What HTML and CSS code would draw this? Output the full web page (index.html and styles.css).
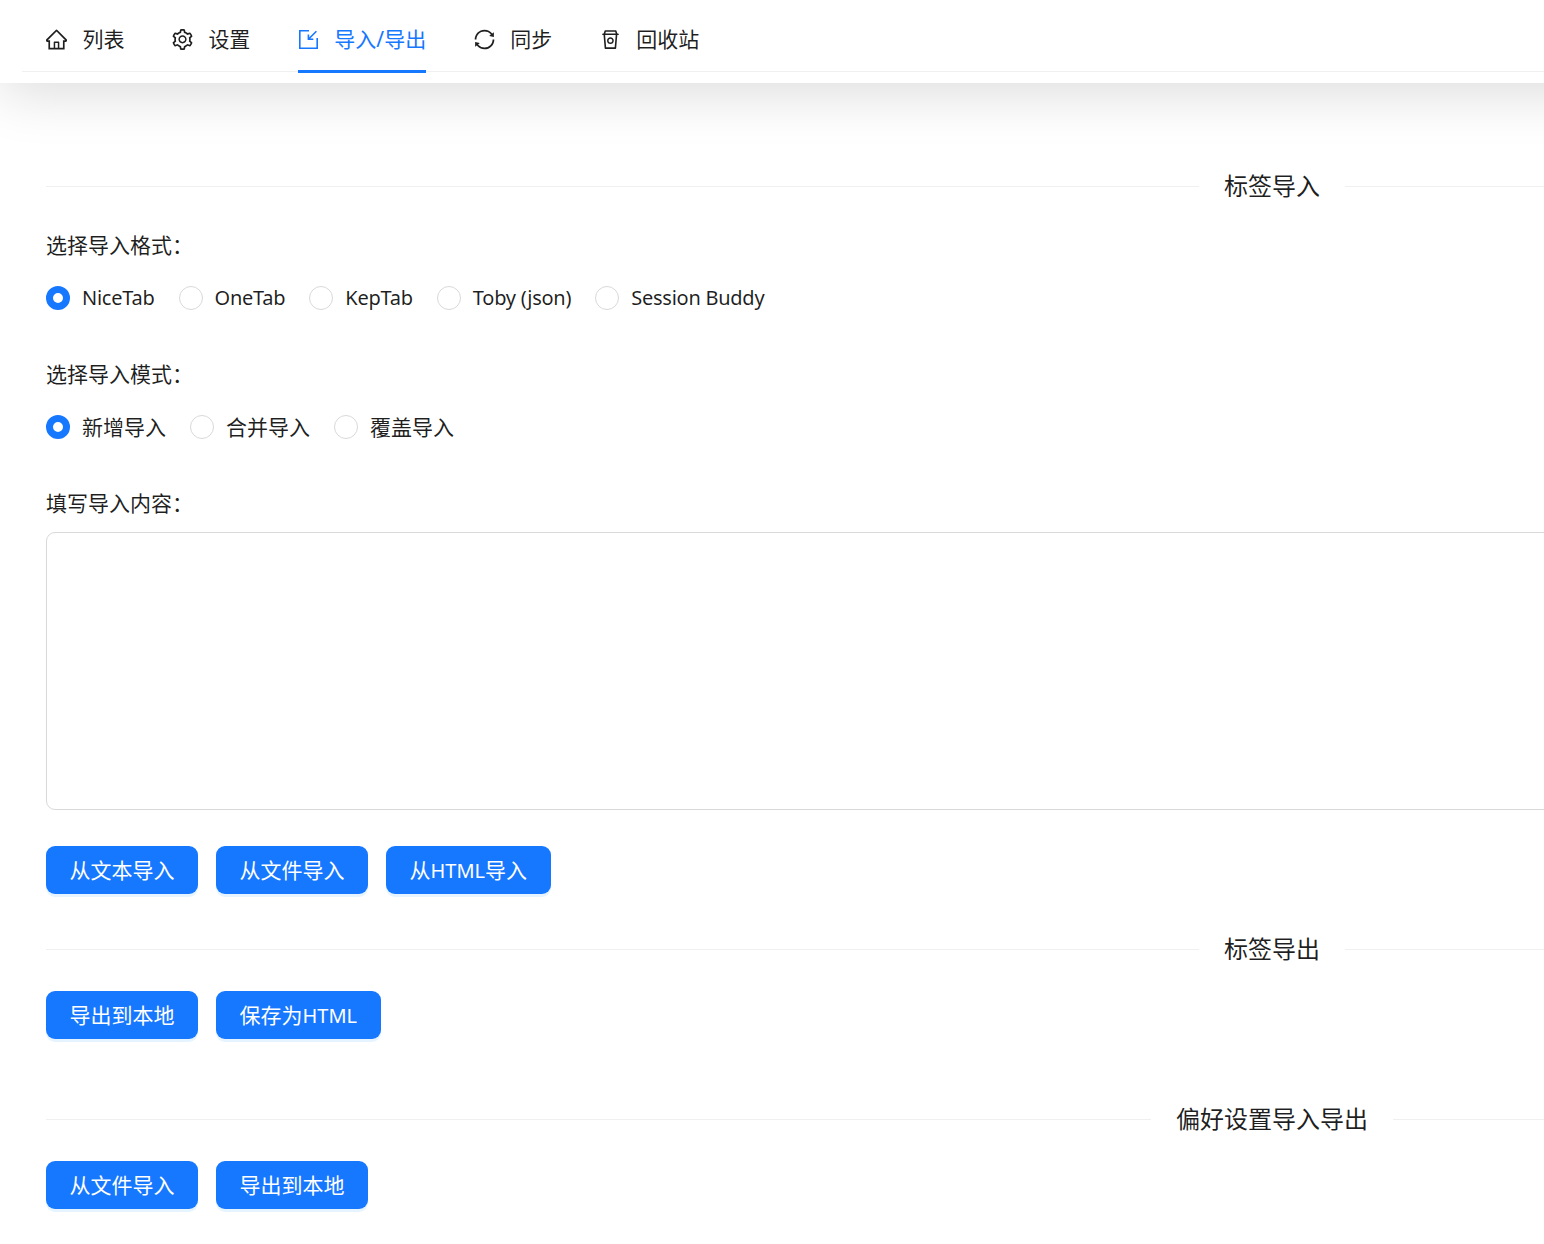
FILE: index.html

```html
<!DOCTYPE html>
<html lang="zh-CN">
<head>
    <meta charset="UTF-8">
    <meta name="viewport" content="width=device-width, initial-scale=1.0">
    <title>导入/导出</title>
    <link rel="stylesheet" href="styles.css">
</head>
<body>
    <header class="header">
        <nav class="tabs">
            <a class="tab">
                <svg class="tab-icon" viewBox="64 64 896 896" fill="currentColor"><path d="M946.5 505L560.1 118.8l-25.9-25.9a31.5 31.5 0 0 0-44.4 0L77.5 505a63.9 63.9 0 0 0-18.8 46c.4 35.2 29.7 63.3 64.9 63.3h42.5V940h691.8V614.3h43.4c17.1 0 33.2-6.7 45.3-18.8a63.6 63.6 0 0 0 18.7-45.3c0-17-6.7-33.1-18.8-45.2zM568 868H456V664h112v204zm217.9-325.7V868H632V640c0-22.1-17.9-40-40-40H432c-22.1 0-40 17.9-40 40v228H238.1V542.3h-96l370-369.7 23.1 23.1L882 542.3h-96.1z"/></svg>
                <span>列表</span>
            </a>
            <a class="tab">
                <svg class="tab-icon" viewBox="64 64 896 896" fill="currentColor"><path d="M924.8 625.7l-65.5-56c3.1-19 4.7-38.4 4.7-57.8s-1.6-38.8-4.7-57.8l65.5-56a32.03 32.03 0 0 0 9.3-35.2l-.9-2.6a443.74 443.74 0 0 0-79.7-137.9l-1.8-2.1a32.12 32.12 0 0 0-35.1-9.5l-81.3 28.9c-30-24.6-63.5-44-99.7-57.6l-15.7-85a32.05 32.05 0 0 0-25.8-25.7l-2.7-.5c-52.1-9.4-106.9-9.4-159 0l-2.7.5a32.05 32.05 0 0 0-25.8 25.7l-15.8 85.4a351.86 351.86 0 0 0-99 57.4l-81.9-29.1a32 32 0 0 0-35.1 9.5l-1.8 2.1a446.02 446.02 0 0 0-79.7 137.9l-.9 2.6c-4.5 12.5-.8 26.5 9.3 35.2l66.3 56.6c-3.1 18.8-4.6 38-4.6 57.1 0 19.2 1.5 38.4 4.6 57.1L99 625.5a32.03 32.03 0 0 0-9.3 35.2l.9 2.6c18.1 50.4 44.9 96.9 79.7 137.9l1.8 2.1a32.12 32.12 0 0 0 35.1 9.5l81.9-29.1c29.8 24.5 63.1 43.9 99 57.4l15.8 85.4a32.05 32.05 0 0 0 25.8 25.7l2.7.5a449.4 449.4 0 0 0 159 0l2.7-.5a32.05 32.05 0 0 0 25.8-25.7l15.7-85a350 350 0 0 0 99.7-57.6l81.3 28.9a32 32 0 0 0 35.1-9.5l1.8-2.1c34.8-41.1 61.6-87.5 79.7-137.9l.9-2.6c4.5-12.3.8-26.3-9.3-35zM788.3 465.9c2.5 15.1 3.8 30.6 3.8 46.1s-1.3 31-3.8 46.1l-6.6 40.1 74.7 63.9a370.03 370.03 0 0 1-42.6 73.6L721 702.8l-31.4 25.8c-23.9 19.6-50.5 35-79.3 45.8l-38.1 14.3-17.9 97a377.5 377.5 0 0 1-85 0l-17.9-97.2-37.8-14.5c-28.5-10.8-55-26.2-78.7-45.7l-31.4-25.9-93.4 33.2c-17-22.9-31.2-47.6-42.6-73.6l75.5-64.5-6.5-40c-2.4-14.9-3.7-30.3-3.7-45.5 0-15.3 1.2-30.6 3.7-45.5l6.5-40-75.5-64.5c11.3-26.1 25.6-50.7 42.6-73.6l93.4 33.2 31.4-25.9c23.7-19.5 50.2-34.9 78.7-45.7l37.9-14.3 17.9-97.2c28.1-3.2 56.8-3.2 85 0l17.9 97 38.1 14.3c28.7 10.8 55.4 26.2 79.3 45.8l31.4 25.8 92.8-32.9c17 22.9 31.2 47.6 42.6 73.6L781.8 426l6.5 39.9zM512 326c-97.2 0-176 78.8-176 176s78.8 176 176 176 176-78.8 176-176-78.8-176-176-176zm79.2 255.2A111.6 111.6 0 0 1 512 614c-29.9 0-58-11.7-79.2-32.8A111.6 111.6 0 0 1 400 502c0-29.9 11.7-58 32.8-79.2C454 401.6 482.1 390 512 390c29.9 0 58 11.6 79.2 32.8A111.6 111.6 0 0 1 624 502c0 29.9-11.7 58-32.8 79.2z"/></svg>
                <span>设置</span>
            </a>
            <a class="tab tab-active">
                <svg class="tab-icon" viewBox="0 0 21 21" fill="none" stroke="currentColor" stroke-width="1.6"><path d="M11 1.8H1.8v17.4h17.4V9"/><path d="M18.4 2.2l-8 8M10.4 5.4v4.9h4.9"/></svg>
                <span>导入/导出</span>
            </a>
            <a class="tab">
                <svg class="tab-icon" viewBox="64 64 896 896" fill="currentColor"><path d="M168 504.2c1-43.7 10-86.1 26.9-126 17.3-41 42.1-77.7 73.7-109.4S337 212.3 378 195c42.4-17.9 87.4-27 133.9-27s91.5 9.1 133.8 27A341.5 341.5 0 0 1 755 268.8c9.9 9.9 19.2 20.4 27.8 31.4l-60.2 47a8 8 0 0 0 3 14.1l175.7 43c5 1.2 9.9-2.6 9.9-7.7l.8-180.9c0-6.7-7.7-10.5-12.9-6.3l-56.4 44.1C765.8 155.1 646.2 92 511.8 92 282.7 92 96.3 275.6 92 503.8a8 8 0 0 0 8 8.2h60c4.4 0 7.9-3.5 8-7.8zm756 7.8h-60c-4.4 0-7.9 3.5-8 7.8-1 43.7-10 86.1-26.9 126-17.3 41-42.1 77.8-73.7 109.4A342.45 342.45 0 0 1 512.1 856a342.24 342.24 0 0 1-243.2-100.8c-9.9-9.9-19.2-20.4-27.8-31.4l60.2-47a8 8 0 0 0-3-14.1l-175.7-43c-5-1.2-9.9 2.6-9.9 7.7l-.7 181c0 6.7 7.7 10.5 12.9 6.3l56.4-44.1C258.2 868.9 377.8 932 512.2 932c229.2 0 415.5-183.7 419.8-411.8a8 8 0 0 0-8-8.2z"/></svg>
                <span>同步</span>
            </a>
            <a class="tab">
                <svg class="tab-icon" viewBox="64 64 896 896" fill="currentColor"><path d="M508 704c79.5 0 144-64.5 144-144s-64.5-144-144-144-144 64.5-144 144 64.5 144 144 144zm0-224c44.2 0 80 35.8 80 80s-35.8 80-80 80-80-35.8-80-80 35.8-80 80-80z"/><path d="M832 256h-28.1l-35.7-120.9c-4-13.7-16.5-23.1-30.7-23.1h-451c-14.3 0-26.8 9.4-30.7 23.1L220.1 256H192c-17.7 0-32 14.3-32 32v28c0 4.4 3.6 8 8 8h45.8l47.7 558.7a32 32 0 0 0 31.9 29.3h429.2a32 32 0 0 0 31.9-29.3L802.2 324H856c4.4 0 8-3.6 8-8v-28c0-17.7-14.3-32-32-32zm-518.6-76h397.2l22.4 76H291l22.4-76zm376.2 664H326.4L282 324h451.9l-44.3 520z"/></svg>
                <span>回收站</span>
            </a>
        </nav>
    </header>

    <main class="content">
        <div class="divider"><span class="divider-text">标签导入</span></div>

        <div class="field-label field-first">选择导入格式：</div>
        <div class="radio-group radio-group-latin">
            <label class="radio radio-checked"><span class="radio-dot"></span><span>NiceTab</span></label>
            <label class="radio"><span class="radio-dot"></span><span>OneTab</span></label>
            <label class="radio"><span class="radio-dot"></span><span>KepTab</span></label>
            <label class="radio"><span class="radio-dot"></span><span>Toby (json)</span></label>
            <label class="radio"><span class="radio-dot"></span><span>Session Buddy</span></label>
        </div>

        <div class="field-label">选择导入模式：</div>
        <div class="radio-group radio-group-cjk">
            <label class="radio radio-checked"><span class="radio-dot"></span><span>新增导入</span></label>
            <label class="radio"><span class="radio-dot"></span><span>合并导入</span></label>
            <label class="radio"><span class="radio-dot"></span><span>覆盖导入</span></label>
        </div>

        <div class="field-label">填写导入内容：</div>
        <textarea class="textarea"></textarea>

        <div class="btn-row btn-row-import">
            <button class="btn">从文本导入</button>
            <button class="btn">从文件导入</button>
            <button class="btn">从<span class="latin">HTML</span>导入</button>
        </div>

        <div class="divider divider-export"><span class="divider-text">标签导出</span></div>
        <div class="btn-row">
            <button class="btn">导出到本地</button>
            <button class="btn">保存为<span class="latin">HTML</span></button>
        </div>

        <div class="divider divider-prefs"><span class="divider-text">偏好设置导入导出</span></div>
        <div class="btn-row">
            <button class="btn">从文件导入</button>
            <button class="btn">导出到本地</button>
        </div>
    </main>
</body>
</html>
```

FILE: styles.css

```css
* {
    box-sizing: border-box;
}
html, body {
    margin: 0;
    height: 1244px;
    overflow: hidden;
}
body {
    background-color: #fff;
    color: rgba(0, 0, 0, 0.88);
    font-family: "Noto Sans", "Noto Sans CJK SC", sans-serif;
    font-size: 21px;
}
.latin {
    font-size: 20px;
}
.header {
    width: 2544px;
    height: 83px;
    padding-left: 22px;
    background-color: #fff;
    box-shadow: 0 10px 56px rgba(0, 0, 0, 0.14);
    position: relative;
}
.tabs {
    display: flex;
    gap: 47.6px;
    height: 72px;
    padding-left: 24px;
    border-bottom: 1.5px solid #f0f0f0;
}
.tab {
    display: flex;
    align-items: center;
    gap: 15.4px;
    height: 73px;
    padding-top: 5px;
    border-bottom: 3px solid transparent;
}
.tab-icon {
    width: 21px;
    height: 21px;
    flex: none;
    margin-top: 3px;
}
.tab-active {
    color: #1677ff;
    border-bottom-color: #1677ff;
}
.content {
    width: 2498px;
    padding: 85px 0 0 46px;
}
.divider {
    display: flex;
    align-items: center;
    height: 36px;
    font-size: 24px;
}
.divider::before,
.divider::after {
    content: "";
    flex: 1;
    border-top: 1.5px solid rgba(5, 5, 5, 0.06);
}
.divider-text {
    padding: 0 25px;
    margin-bottom: 4px;
}
.divider-export {
    margin-top: 37px;
}
.divider-prefs {
    margin-top: 62px;
}
.field-label {
    height: 34px;
    line-height: 33px;
    margin-top: 45px;
}
.field-first {
    margin-top: 25px;
}
.radio-group {
    display: flex;
    gap: 24px;
    height: 30px;
    margin-top: 20px;
}
.radio {
    display: flex;
    align-items: center;
    gap: 12px;
}
.radio-group-latin .radio span:last-child {
    padding-bottom: 2px;
    font-size: 20px;
    letter-spacing: -0.25px;
}
.radio-group-cjk .radio span:last-child {
    padding-bottom: 3px;
}
.radio-dot {
    flex: none;
    width: 24px;
    height: 24px;
    padding: 0;
    border: 1.5px solid #d9d9d9;
    border-radius: 50%;
    background-color: #fff;
}
.radio-checked .radio-dot {
    border: 7.5px solid #1677ff;
}
.textarea {
    display: block;
    width: 100%;
    height: 278px;
    margin-top: 11px;
    border: 1.5px solid #d9d9d9;
    border-radius: 9px;
    background-color: #fff;
    resize: none;
}
.btn-row {
    display: flex;
    gap: 18px;
    margin-top: 24px;
}
.btn-row-import {
    margin-top: 36px;
}
.btn {
    height: 48px;
    padding: 0 23.5px 2px;
    border: none;
    border-radius: 9px;
    background-color: #1677ff;
    box-shadow: 0 3px 0 rgba(5, 145, 255, 0.1);
    color: #fff;
    font-family: inherit;
    font-size: 21px;
}
```
